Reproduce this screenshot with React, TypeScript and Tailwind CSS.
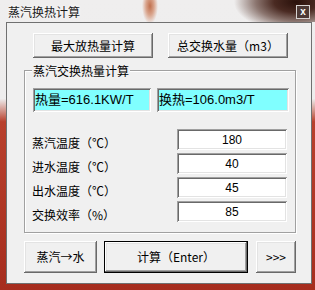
const cjk = "font-['Noto_Sans_CJK_SC',sans-serif]";
const btn =
  "flex items-center justify-center bg-[#f0f0f0] text-[12px] text-black shadow-[inset_-1px_-1px_#696969,inset_1px_1px_#ffffff,inset_-2px_-2px_#a0a0a0,inset_2px_2px_#e3e3e3]";
const sunken =
  "shadow-[inset_1px_1px_#a0a0a0,inset_-1px_-1px_#ffffff,inset_2px_2px_#696969,inset_-2px_-2px_#e3e3e3]";

const rows = [
  { label: "蒸汽温度（℃）", value: "180" },
  { label: "进水温度（℃）", value: "40" },
  { label: "出水温度（℃）", value: "45" },
  { label: "交换效率（%）", value: "85" },
];

export default function App() {
  return (
    <div
      className={`flex h-[290px] w-[315px] flex-col overflow-hidden bg-[linear-gradient(to_bottom,#efeeee_0%,#eeeded_34%,#b8402c_42%,#a62d1e_100%)] ${cjk}`}
    >
      {/* title bar, glass blur drawn as gradients */}
      <div className="flex h-[22px] shrink-0 items-start justify-between bg-[radial-gradient(ellipse_62px_30px_at_296px_2px,#2a110b_0%,#4a2a22_35%,#8c7670_65%,transparent_100%),radial-gradient(ellipse_8px_18px_at_150px_6px,#c0704e_0%,#d9a48c_50%,transparent_100%)] pl-[8px] pr-[5px]">
        <span className="mt-[5px] text-[12px] leading-[14px] text-[#1b1b1b] [text-shadow:0_0_4px_#ffffff]">
          蒸汽换热计算
        </span>
        <div className="mt-[5px] flex h-[14px] w-[14px] items-center justify-center border border-[#d8d4d2] bg-[#4e3a36] font-['Liberation_Sans',sans-serif] text-[10px] font-bold leading-none text-white">
          x
        </div>
      </div>

      {/* client area */}
      <div className="mb-[6px] ml-[6px] mr-[3px] flex-1 border border-[#707070] bg-[#f0f0f0]">
        <div className="ml-[26px] mt-[10px] flex gap-[15px]">
          <button className={`${btn} h-[25px] w-[120px]`}>最大放热量计算</button>
          <button className={`${btn} h-[25px] w-[120px]`}>总交换水量（m3）</button>
        </div>

        {/* group box */}
        <div className="relative ml-[17px] mt-[12px] w-[272px] border border-[#a0a0a0] pl-[8px] pt-[17px] pb-[7px] shadow-[inset_1px_1px_#ffffff,1px_1px_#ffffff]">
          <span className="absolute left-[7px] top-[-8px] bg-[#f0f0f0] px-[1px] text-[12px] leading-[15px] text-black">
            蒸汽交换热量计算
          </span>
          <div className="flex gap-[6px]">
            <div
              className={`${sunken} flex h-[24px] w-[118px] items-center bg-[#80ffff] pl-[2px] font-['Liberation_Sans','Noto_Sans_CJK_SC',sans-serif] text-[13px] text-black`}
            >
              热量=616.1KW/T
            </div>
            <div
              className={`${sunken} flex h-[24px] w-[132px] items-center bg-[#80ffff] pl-[2px] font-['Liberation_Sans','Noto_Sans_CJK_SC',sans-serif] text-[13px] text-black`}
            >
              换热=106.0m3/T
            </div>
          </div>

          <div className="mt-[17px] flex flex-col">
            {rows.map((r) => (
              <div key={r.label} className="flex h-[24px] items-start justify-between pr-[8px]">
                <span className="ml-[-1px] mt-[7px] text-[12px] leading-[14px] text-black">{r.label}</span>
                <div
                  className={`${sunken} flex h-[21px] w-[110px] items-center justify-center bg-white font-['Liberation_Sans',sans-serif] text-[12px] text-black`}
                >
                  {r.value}
                </div>
              </div>
            ))}
          </div>
        </div>

        <div className="ml-[17px] mt-[8px] flex">
          <button className={`${btn} h-[32px] w-[73px]`}>蒸汽→水</button>
          <button
            className={`${btn} ml-[7px] h-[32px] w-[144px] border border-black`}
          >
            计算（Enter）
          </button>
          <button className={`${btn} ml-[8px] h-[32px] w-[40px]`}>&gt;&gt;&gt;</button>
        </div>
      </div>
    </div>
  );
}
